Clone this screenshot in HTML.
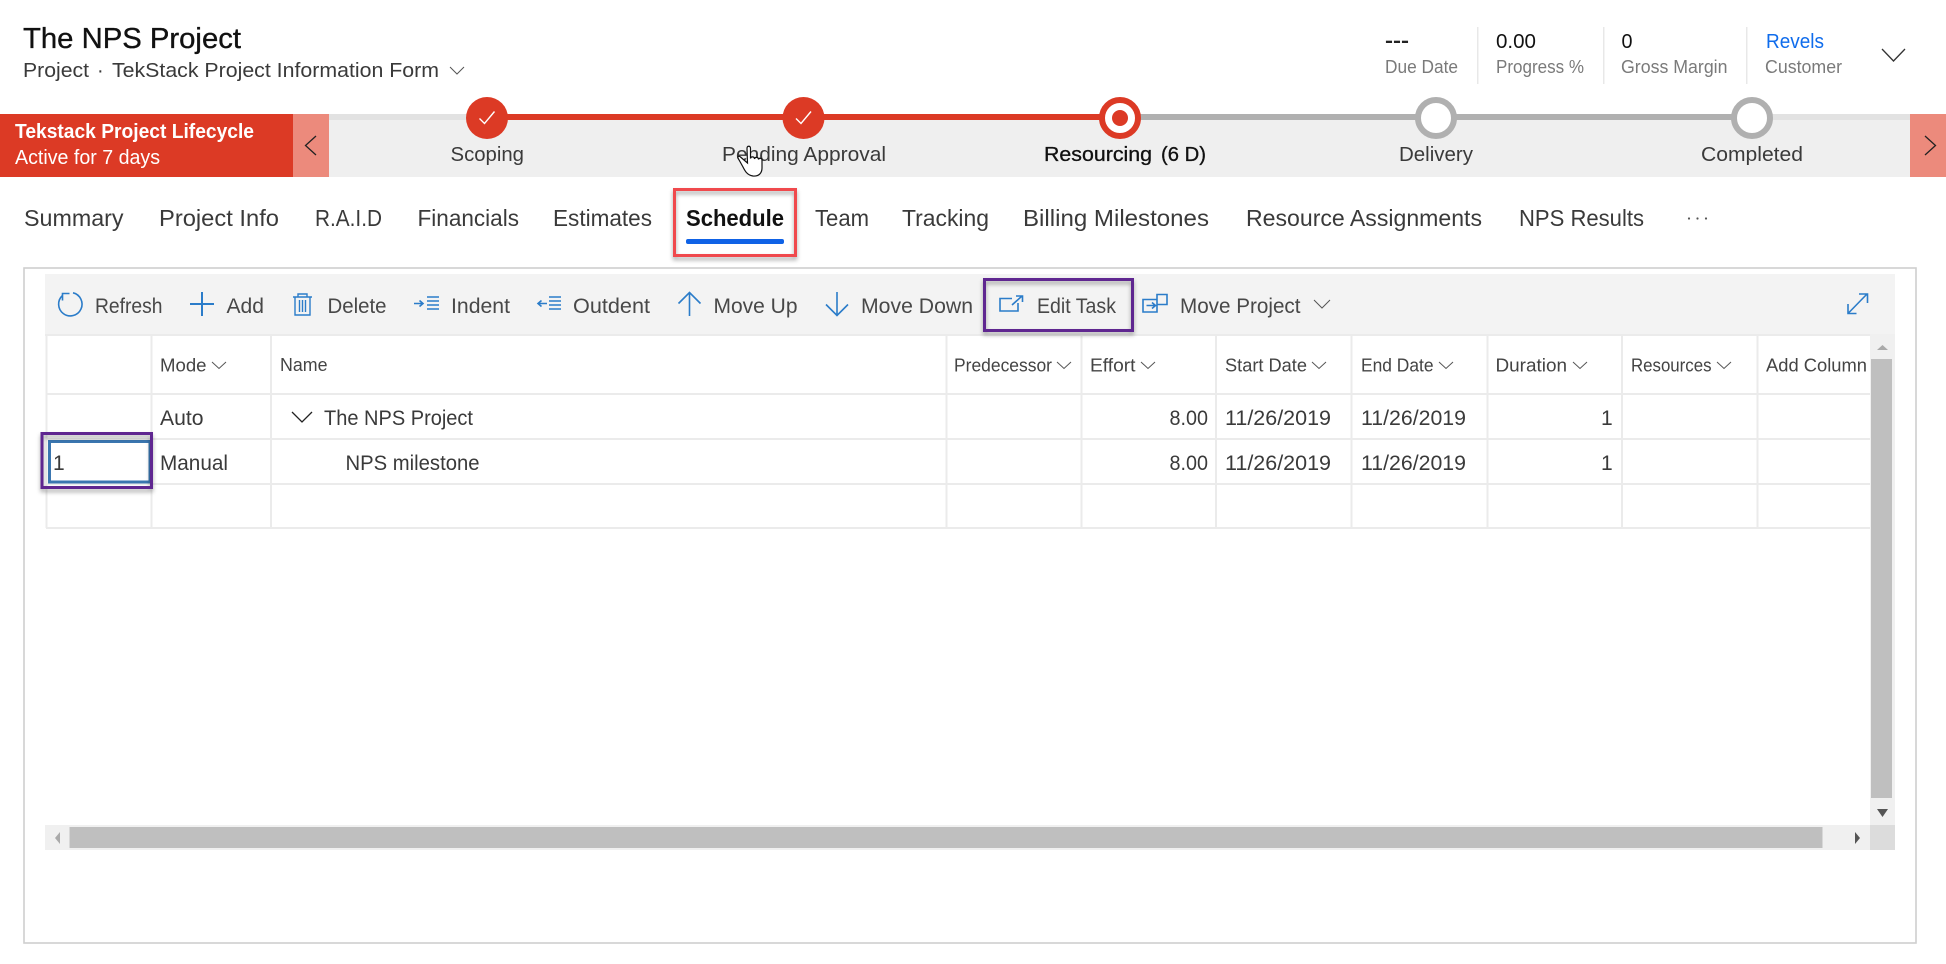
<!DOCTYPE html>
<html><head><meta charset="utf-8"><title>The NPS Project</title>
<style>
html,body{margin:0;padding:0;background:#fff;width:1946px;height:964px;overflow:hidden}
svg{display:block}
text{font-family:"Liberation Sans",sans-serif;fill:#3a3a3a;white-space:pre}
.t{font-size:20px}.r{font-size:21px}.h{font-size:18.5px;fill:#444}.tab{font-size:23px;fill:#3a3a3a}
.tb{font-size:21px;fill:#484848}.l{font-size:18px;fill:#7a7a7a}.v{font-size:20px;fill:#111}
.ic{fill:none;stroke:#2b7cc9;stroke-width:1.6}
.ch{fill:none;stroke:#555;stroke-width:1}
.gl{fill:#ebebeb}
</style></head><body>
<svg width="1946" height="964" viewBox="0 0 1946 964" xmlns="http://www.w3.org/2000/svg">
<defs><filter id="s" x="-20%" y="-20%" width="140%" height="140%"><feDropShadow dx="0" dy="3" stdDeviation="2" flood-color="#000" flood-opacity=".35"/></filter></defs>
<rect width="1946" height="964" fill="#fff"/>

<!-- header -->
<text x="23" y="48" font-size="29" style="fill:#111;stroke:#111;stroke-width:.35" textLength="218" lengthAdjust="spacingAndGlyphs">The NPS Project</text>
<text x="23" y="77" font-size="20" textLength="66" lengthAdjust="spacingAndGlyphs">Project</text>
<text x="97" y="77" font-size="20">·</text>
<text x="112" y="77" font-size="20" textLength="327" lengthAdjust="spacingAndGlyphs">TekStack Project Information Form</text>
<path d="M450 67l7 7 7-7" class="ch"/>

<text x="1385" y="47" font-size="19" font-weight="bold" style="fill:#222" textLength="24" lengthAdjust="spacingAndGlyphs">---</text>
<text x="1385" y="73" class="l" textLength="73" lengthAdjust="spacingAndGlyphs">Due Date</text>
<rect x="1477" y="27" width="1.5" height="57" fill="#e8e8e8"/>
<text x="1496" y="48" class="v" textLength="40" lengthAdjust="spacingAndGlyphs">0.00</text>
<text x="1496" y="73" class="l" textLength="88" lengthAdjust="spacingAndGlyphs">Progress %</text>
<rect x="1603" y="27" width="1.5" height="57" fill="#e8e8e8"/>
<text x="1621.5" y="48" class="v" textLength="11" lengthAdjust="spacingAndGlyphs">0</text>
<text x="1621" y="73" class="l" textLength="106.5" lengthAdjust="spacingAndGlyphs">Gross Margin</text>
<rect x="1746" y="27" width="1.5" height="57" fill="#e8e8e8"/>
<text x="1766" y="48" font-size="20" style="fill:#0f6cec" textLength="58" lengthAdjust="spacingAndGlyphs">Revels</text>
<text x="1765" y="73" class="l" textLength="77" lengthAdjust="spacingAndGlyphs">Customer</text>
<path d="M1882 49l11.5 12 11.500-12" fill="none" stroke="#333" stroke-width="1.3"/>

<!-- process bar -->
<rect x="329" y="114" width="1581" height="63" fill="#efefef"/>
<rect x="329" y="114" width="1581" height="6" fill="#e2e2e2"/>
<rect x="0" y="114" width="293" height="63" fill="#dc3a25"/>
<rect x="293" y="114" width="36" height="63" fill="#ec8a7c"/>
<rect x="1910" y="114" width="36" height="63" fill="#ec8a7c"/>
<path d="M316 136l-10.500 9.500 10.500 9.500M1925 136l10.500 9.500-10.500 9.500" fill="none" stroke="#222" stroke-width="1.3"/>
<text x="15" y="138" font-size="20" font-weight="bold" style="fill:#fff" textLength="239" lengthAdjust="spacingAndGlyphs">Tekstack Project Lifecycle</text>
<text x="15" y="164" font-size="20" style="fill:#fff" textLength="145" lengthAdjust="spacingAndGlyphs">Active for 7 days</text>
<rect x="487" y="114" width="633" height="6" fill="#dc3a25"/>
<rect x="1120" y="114" width="632" height="6" fill="#b0b0b0"/>
<circle cx="487" cy="118" r="21" fill="#dc3a25"/>
<path d="M479.500 118.500l5 5 10-12" fill="none" stroke="#fff" stroke-width="1.400"/>
<circle cx="803.500" cy="118" r="21" fill="#dc3a25"/>
<path d="M796 118.500l5 5 10-12" fill="none" stroke="#fff" stroke-width="1.400"/>
<circle cx="1120" cy="118" r="18" fill="#fff" stroke="#dc3a25" stroke-width="6"/>
<circle cx="1120" cy="118" r="8" fill="#dc3a25"/>
<circle cx="1436" cy="118" r="18" fill="#fff" stroke="#b0b0b0" stroke-width="6"/>
<circle cx="1752" cy="118" r="18" fill="#fff" stroke="#b0b0b0" stroke-width="6"/>
<text x="450.500" y="161" class="t" textLength="73.500" lengthAdjust="spacingAndGlyphs">Scoping</text>
<text x="722" y="161" class="t" textLength="164" lengthAdjust="spacingAndGlyphs">Pending Approval</text>
<text x="1044" y="161" class="t" style="fill:#111;stroke:#111;stroke-width:.3" textLength="108" lengthAdjust="spacingAndGlyphs">Resourcing</text>
<text x="1161" y="161" class="t" style="fill:#111;stroke:#111;stroke-width:.3" textLength="45" lengthAdjust="spacingAndGlyphs">(6 D)</text>
<text x="1399" y="161" class="t" textLength="74" lengthAdjust="spacingAndGlyphs">Delivery</text>
<text x="1701" y="161" class="t" textLength="102" lengthAdjust="spacingAndGlyphs">Completed</text>
<path d="M747.500 163l-7-6c-1.500-1.500-3-.5-2.500 1l5 9c2 4 4 8 10 9 6 .5 9-3 9-8v-8c0-2-3-2.500-3.500-.5 0-2.500-3.500-3-4-.5 0-2.500-3.500-3-4-.5v-10c0-3-3.500-3-3.500 0z" fill="#fff" stroke="#111" stroke-width="1.200"/>

<!-- tabs -->
<text x="24" y="226" class="tab" textLength="99.500" lengthAdjust="spacingAndGlyphs">Summary</text>
<text x="159" y="226" class="tab" textLength="120" lengthAdjust="spacingAndGlyphs">Project Info</text>
<text x="315" y="226" class="tab" textLength="67" lengthAdjust="spacingAndGlyphs">R.A.I.D</text>
<text x="417.500" y="226" class="tab" textLength="101.500" lengthAdjust="spacingAndGlyphs">Financials</text>
<text x="553" y="226" class="tab" textLength="99" lengthAdjust="spacingAndGlyphs">Estimates</text>
<text x="686" y="226" class="tab" style="fill:#111;font-weight:bold" textLength="98" lengthAdjust="spacingAndGlyphs">Schedule</text>
<text x="815" y="226" class="tab" textLength="54" lengthAdjust="spacingAndGlyphs">Team</text>
<text x="902" y="226" class="tab" textLength="87" lengthAdjust="spacingAndGlyphs">Tracking</text>
<text x="1023" y="226" class="tab" textLength="186" lengthAdjust="spacingAndGlyphs">Billing Milestones</text>
<text x="1246" y="226" class="tab" textLength="236" lengthAdjust="spacingAndGlyphs">Resource Assignments</text>
<text x="1519" y="226" class="tab" textLength="125" lengthAdjust="spacingAndGlyphs">NPS Results</text>
<circle cx="1689" cy="218.500" r="1.100" fill="#555"/><circle cx="1697.500" cy="218.500" r="1.100" fill="#555"/><circle cx="1706" cy="218.500" r="1.100" fill="#555"/>
<rect x="686" y="239" width="98" height="5" rx="2" fill="#0f62e6"/>
<rect x="674.500" y="189.500" width="121" height="66" fill="none" stroke="#f0484e" stroke-width="3" filter="url(#s)"/>

<!-- container -->
<rect x="24" y="268" width="1892" height="675" fill="#fff" stroke="#cfcfcf" stroke-width="1.600"/>
<rect x="45" y="274" width="1850" height="60" fill="#f3f3f3"/>

<!-- table grid -->
<rect x="45" y="334" width="1826" height="2" class="gl"/>
<rect x="46" y="393" width="1825" height="2" class="gl"/>
<rect x="46" y="438" width="1825" height="2" class="gl"/>
<rect x="46" y="483" width="1825" height="2" class="gl"/>
<rect x="46" y="527" width="1825" height="2" class="gl"/>
<g class="gl">
<rect x="45.500" y="335" width="2" height="193"/><rect x="150.500" y="335" width="2" height="193"/><rect x="270" y="335" width="2" height="193"/><rect x="945.500" y="335" width="2" height="193"/><rect x="1080.500" y="335" width="2" height="193"/><rect x="1215" y="335" width="2" height="193"/><rect x="1350.500" y="335" width="2" height="193"/><rect x="1486.500" y="335" width="2" height="193"/><rect x="1621" y="335" width="2" height="193"/><rect x="1756.500" y="335" width="2" height="193"/>
</g>

<!-- toolbar -->
<path d="M73 292.800A11.700 11.700 0 1 1 62.500 295.500" class="ic"/><path d="M62.500 300.500v-7h7" class="ic"/>
<text x="95" y="313" class="tb" textLength="67.500" lengthAdjust="spacingAndGlyphs">Refresh</text>
<path d="M190 304h24M202 292v24" class="ic" style="stroke-width:2"/>
<text x="226.500" y="313" class="tb" textLength="37.500" lengthAdjust="spacingAndGlyphs">Add</text>
<path d="M293 297h19M298 297v-3h9v3M295 297v18h15v-18M299.500 300v12M302.500 300v12M305.500 300v12" class="ic" style="stroke-width:1.400"/>
<text x="327.500" y="313" class="tb" textLength="59" lengthAdjust="spacingAndGlyphs">Delete</text>
<path d="M414 303.500h8.500M419.500 300.500l3.500 3-3.500 3M427 297h12M427 301h12M427 305h12M427 309h12" class="ic" style="stroke-width:1.600"/>
<text x="451" y="313" class="tb" textLength="59" lengthAdjust="spacingAndGlyphs">Indent</text>
<path d="M547 303.500h-8.500M541.500 300.500l-3.500 3 3.500 3M549 297h12M549 301h12M549 305h12M549 309h12" class="ic" style="stroke-width:1.600"/>
<text x="573" y="313" class="tb" textLength="77" lengthAdjust="spacingAndGlyphs">Outdent</text>
<path d="M689.500 316v-23.500M678.500 303.500l11-11 11 11" class="ic"/>
<text x="713.500" y="313" class="tb" textLength="84" lengthAdjust="spacingAndGlyphs">Move Up</text>
<path d="M837 292v23.500M826 304.500l11 11 11-11" class="ic"/>
<text x="861" y="313" class="tb" textLength="112" lengthAdjust="spacingAndGlyphs">Move Down</text>
<path d="M1012 298.500h-12v12.500h18v-8M1012 305l10-9M1016 296h6.500v6" class="ic"/>
<text x="1037" y="313" class="tb" textLength="79" lengthAdjust="spacingAndGlyphs">Edit Task</text>
<path d="M1157 299.500h-14v12.500h14v-12.500M1157 299.500v-5h10v10h-10M1146.500 305.500h9M1152 302.500l3.500 3-3.500 3" class="ic"/>
<text x="1180" y="313" class="tb" textLength="120.500" lengthAdjust="spacingAndGlyphs">Move Project</text>
<path d="M1314 300l8 8 8-8" class="ch"/>
<path d="M1848.500 313l18.500-19M1859 294h8.500v9M1848 304v9.500h8.500" class="ic"/>
<rect x="984.500" y="279.500" width="148" height="51" fill="none" stroke="#5f2590" stroke-width="3" filter="url(#s)"/>

<!-- table headers -->
<text x="160" y="371.500" class="h" textLength="46.500" lengthAdjust="spacingAndGlyphs">Mode</text><path d="M212 362l7 6.500 7-6.500" class="ch"/>
<text x="280" y="371" class="h" textLength="47.500" lengthAdjust="spacingAndGlyphs">Name</text>
<text x="954" y="371.500" class="h" textLength="98" lengthAdjust="spacingAndGlyphs">Predecessor</text><path d="M1057 362l7 6.500 7-6.500" class="ch"/>
<text x="1090" y="371.500" class="h" textLength="45.500" lengthAdjust="spacingAndGlyphs">Effort</text><path d="M1141 362l7 6.500 7-6.500" class="ch"/>
<text x="1225" y="371.500" class="h" textLength="82" lengthAdjust="spacingAndGlyphs">Start Date</text><path d="M1312 362l7 6.500 7-6.500" class="ch"/>
<text x="1361" y="371.500" class="h" textLength="72.500" lengthAdjust="spacingAndGlyphs">End Date</text><path d="M1439 362l7 6.500 7-6.500" class="ch"/>
<text x="1495.500" y="371.500" class="h" textLength="71.500" lengthAdjust="spacingAndGlyphs">Duration</text><path d="M1573 362l7 6.500 7-6.500" class="ch"/>
<text x="1631" y="371.500" class="h" textLength="80.500" lengthAdjust="spacingAndGlyphs">Resources</text><path d="M1717 362l7 6.500 7-6.500" class="ch"/>
<text x="1766" y="371.500" class="h" textLength="101" lengthAdjust="spacingAndGlyphs">Add Column</text>

<!-- rows -->
<text x="160" y="425" class="r" textLength="43.500" lengthAdjust="spacingAndGlyphs">Auto</text>
<path d="M292 412l10 10 10-10" fill="none" stroke="#222" stroke-width="1.300"/>
<text x="324" y="425" class="r" textLength="149" lengthAdjust="spacingAndGlyphs">The NPS Project</text>
<text x="1169.500" y="425" class="r" textLength="38.500" lengthAdjust="spacingAndGlyphs">8.00</text>
<text x="1225" y="425" class="r" textLength="106" lengthAdjust="spacingAndGlyphs">11/26/2019</text>
<text x="1361" y="425" class="r" textLength="105" lengthAdjust="spacingAndGlyphs">11/26/2019</text>
<text x="1601" y="425" class="r">1</text>

<text x="53" y="470" class="r">1</text>
<text x="160" y="470" class="r" textLength="68" lengthAdjust="spacingAndGlyphs">Manual</text>
<text x="345.500" y="470" class="r" textLength="134" lengthAdjust="spacingAndGlyphs">NPS milestone</text>
<text x="1169.500" y="470" class="r" textLength="38.500" lengthAdjust="spacingAndGlyphs">8.00</text>
<text x="1225" y="470" class="r" textLength="106" lengthAdjust="spacingAndGlyphs">11/26/2019</text>
<text x="1361" y="470" class="r" textLength="105" lengthAdjust="spacingAndGlyphs">11/26/2019</text>
<text x="1601" y="470" class="r">1</text>

<rect x="49.500" y="441.500" width="100.500" height="40.500" fill="none" stroke="#3a76b0" stroke-width="3"/>
<rect x="42" y="433.500" width="109.500" height="54" fill="none" stroke="#5f2590" stroke-width="3" filter="url(#s)"/>

<!-- scrollbars -->
<rect x="1870" y="334" width="25" height="491" fill="#f0f0f0"/>
<rect x="1871" y="359" width="21" height="439" fill="#bfbfbf"/>
<path d="M1877 350l5.500-5 5.500 5z" fill="#aaa"/>
<path d="M1877 809h11l-5.500 8z" fill="#555"/>
<rect x="45" y="825" width="1825" height="25" fill="#f0f0f0"/>
<rect x="69.500" y="827" width="1753" height="21" fill="#bfbfbf"/>
<rect x="1870" y="825" width="25" height="25" fill="#dcdcdc"/>
<path d="M60 832v12l-5-6z" fill="#aaa"/>
<path d="M1855 832v12l5-6z" fill="#555"/>
</svg>
</body></html>
